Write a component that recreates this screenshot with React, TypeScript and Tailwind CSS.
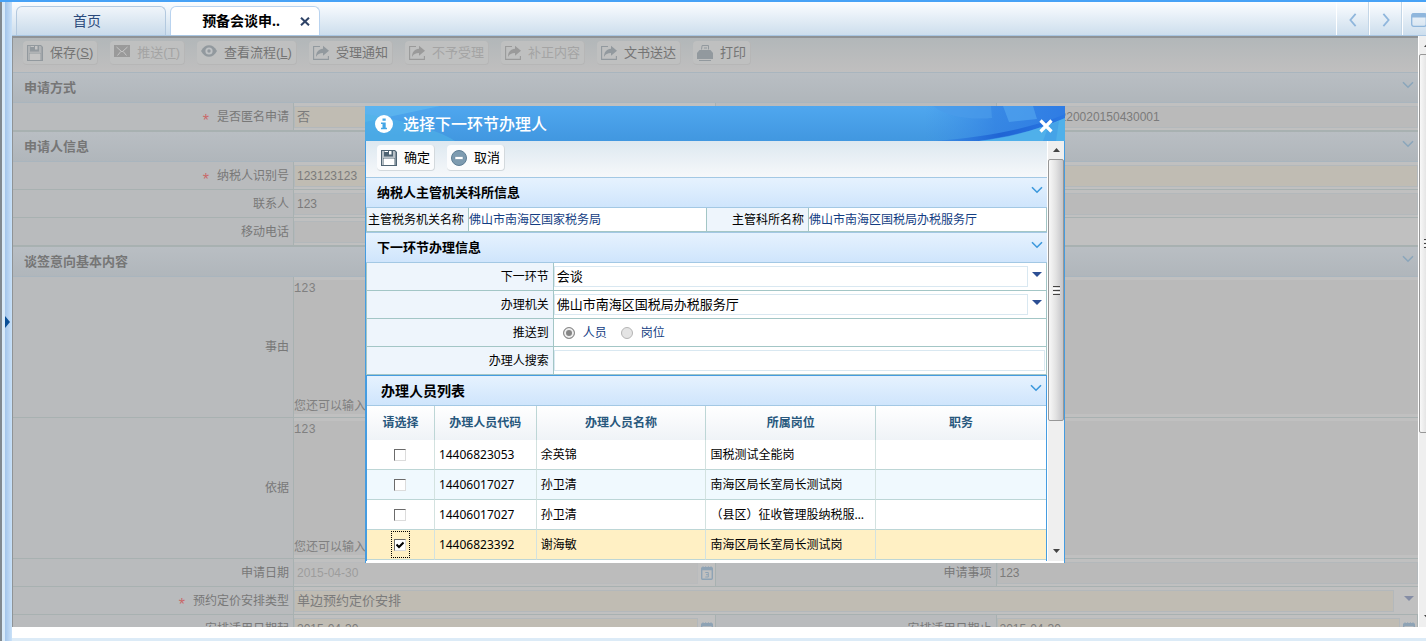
import { useState } from "react";
import type { ReactNode } from "react";

interface Person {
  id: number;
  code: string;
  name: string;
  post: string;
  duty: string;
}

const people: Person[] = [
  { id: 1, code: "14406823053", name: "余英锦", post: "国税测试全能岗", duty: "" },
  { id: 2, code: "14406017027", name: "孙卫清", post: "南海区局长室局长测试岗", duty: "" },
  { id: 3, code: "14406017027", name: "孙卫清", post: "（县区）征收管理股纳税服务岗", duty: "" },
  { id: 4, code: "14406823392", name: "谢海敏", post: "南海区局长室局长测试岗", duty: "" },
];

/* ---------- icons ---------- */

function SaveIcon({ paper }: { paper: string }) {
  return (
    <svg width="16" height="16" viewBox="0 0 16 16">
      <path d="M0 0h14l2 2v14H0z" fill="currentColor" />
      <path d="M1 1h2v5.500h9V1h1.500L14.500 2v13H14V8H2v7H1z" fill={paper} opacity=".6" />
      <path d="M2.500 8.500h11V15h-11z" fill={paper} />
      <path d="M8 1h2.500v3.500H8zM3.500 1H7v1H3.500z" fill={paper} />
    </svg>
  );
}

function MailIcon() {
  return (
    <svg width="16" height="16" viewBox="0 0 16 16">
      <path d="M0 0h16v12H0z" fill="currentColor" />
      <path d="M2.500 2l5.500 5 5.500-5M3.500 10.500L6.800 6.500M12.500 10.500L9.200 6.500" fill="none" stroke="#c6c6c6" />
    </svg>
  );
}

function EyeIcon() {
  return (
    <svg width="16" height="16" viewBox="0 0 16 16">
      <path d="M0 6C2.500 1.800 5 .2 8 .2S13.500 1.800 16 6c-2.500 4.200-5 5.800-8 5.800S2.500 10.200 0 6z" fill="currentColor" />
      <circle cx="8" cy="6" r="3.600" fill="#bfc2c4" />
      <circle cx="8" cy="6" r="1.700" fill="currentColor" />
    </svg>
  );
}

function ShareIcon() {
  return (
    <svg width="16" height="16" viewBox="0 0 16 16">
      <path d="M7 1.500H.6v12.900h14.800V11" fill="none" stroke="currentColor" strokeWidth="1.100" />
      <path d="M10 .8l6 5-6 5V8C6.500 8 4.500 9 3 12c0-5 2.500-8 7-8.300z" fill="currentColor" />
    </svg>
  );
}

function PrintIcon() {
  return (
    <svg width="16" height="16" viewBox="0 0 16 16">
      <path d="M4.500 4.500l.6-4h6.400v4M7 3h3" fill="none" stroke="currentColor" />
      <path d="M2.500 5h11L16 8v6H0V8z" fill="currentColor" />
      <path d="M2 15.500h12" stroke="currentColor" />
    </svg>
  );
}

function MinusIcon() {
  return (
    <svg width="16" height="16" viewBox="0 0 16 16">
      <circle cx="8" cy="8" r="7.500" fill="#7d9bb0" stroke="#5d7d94" />
      <rect x="4" y="6.500" width="8" height="3" rx=".5" fill="#fff" stroke="#5d7d94" strokeWidth=".5" />
    </svg>
  );
}

function InfoIcon() {
  return (
    <svg width="18" height="18" viewBox="0 0 18 18">
      <circle cx="9" cy="9" r="9" fill="#fff" />
      <path d="M7.500 3.500h3.200v2.300H7.500zM6 7.500h4.700v5.200H12v1.500H6v-1.500h1.500V9H6z" fill="#44a6e6" />
    </svg>
  );
}

function Chevron({ color }: { color: string }) {
  return (
    <svg width="12" height="8" viewBox="0 0 12 8" fill="none" stroke={color} strokeWidth="1.600">
      <path d="M1 1.200l5 5 5-5" />
    </svg>
  );
}

function Caret({ color }: { color: string }) {
  return (
    <svg width="10" height="5" viewBox="0 0 10 5">
      <path d="M0 0h10L5 5z" fill={color} />
    </svg>
  );
}

function CalendarIcon() {
  return (
    <svg width="12" height="14" viewBox="0 0 12 14" fill="none" stroke="#8ea3b5">
      <rect x=".7" y="1.700" width="10.600" height="11.600" rx="1" strokeWidth="1.400" />
      <path d="M0 3h12" strokeWidth="2.500" />
      <path d="M2 .3v2M4.700.3v2M7.400.3v2M10 .3v2" />
      <path d="M4.300 6.500h3v4.500h-3M5 8.700h2.300" />
    </svg>
  );
}

function ScrollArrow({ up = false }: { up?: boolean }) {
  return (
    <svg width="7" height="4" viewBox="0 0 7 4" className="shrink-0">
      <path d={up ? "M0 4h7L3.500 0z" : "M0 0h7L3.500 4z"} fill="#444" />
    </svg>
  );
}

function ScrollRail({ thumb, className = "" }: { thumb: string; className?: string }) {
  return (
    <div className={`flex shrink-0 flex-col items-center bg-[#efefef] ${className}`}>
      <div className="flex h-[18px] shrink-0 items-center">
        <ScrollArrow up />
      </div>
      <div
        className={`flex w-full flex-col items-center justify-center gap-px rounded-xs border border-[#979797] bg-linear-to-r from-[#f8f8f8] via-[#e2e2e2] to-[#c4c4c8] ${thumb}`}
      >
        <span className="h-px w-[7px] bg-[#444]" />
        <span className="h-px w-[7px] bg-white" />
        <span className="h-px w-[7px] bg-[#444]" />
        <span className="h-px w-[7px] bg-white" />
        <span className="h-px w-[7px] bg-[#444]" />
      </div>
      <div className="flex grow items-end pb-2">
        <ScrollArrow />
      </div>
    </div>
  );
}

/* ---------- background page ---------- */

interface ToolButtonProps {
  icon: ReactNode;
  children: ReactNode;
  disabled?: boolean;
}

function ToolButton({ icon, children, disabled }: ToolButtonProps) {
  return (
    <button
      type="button"
      disabled={disabled}
      className="flex h-6 shrink-0 items-center gap-[7px] rounded-sm border-r border-b border-[#b6b6b6] bg-[#bfc0c0] pr-1 pl-1 font-['Liberation_Sans','Noto_Sans_CJK_SC',sans-serif] text-[13px] text-[#747474] disabled:text-[#a4a4a4]"
    >
      <span className={disabled ? "text-[#9a9a9a]" : "text-[#92999e]"}>{icon}</span>
      <span>{children}</span>
    </button>
  );
}

function PageSection({ title }: { title: string }) {
  return (
    <div className="flex h-[30px] shrink-0 items-start justify-between border-b border-[#a9b5be] bg-linear-to-b from-[#b9bec3] to-[#b0b6bb] pr-1 pl-[11px]">
      <h2 className="text-[13px] leading-[29px] font-bold text-[#767676]">{title}</h2>
      <button type="button" aria-label="收起" className="pt-2">
        <Chevron color="#8ba6bb" />
      </button>
    </div>
  );
}

function PageLabel({ htmlFor, required, children }: { htmlFor: string; required?: boolean; children: ReactNode }) {
  return (
    <label
      htmlFor={htmlFor}
      className="flex items-center justify-end gap-2 border-r border-[#a8b1b1] bg-[#b9bbbd] pr-1 text-[#787878]"
    >
      {required && <span className="pt-2 font-['Liberation_Sans'] text-base leading-3 text-[#c96a6a]">*</span>}
      {children}
    </label>
  );
}

const pageRow = "grid min-h-7 shrink-0 grid-cols-[2fr_3fr_2fr_3fr] border-b border-[#a8b1b1] bg-[#c0c0c0]";
const pageInput =
  "h-[22px] w-full min-w-0 border border-[#b3b8bb] bg-[#bababa] px-0.5 font-['Liberation_Sans','Noto_Sans_CJK_SC',sans-serif] text-xs text-[#7b7b7b] outline-none";
const beigeInput =
  "h-[22px] w-full min-w-0 border border-[#b3b8bb] bg-[#c0bcb3] px-0.5 font-['Liberation_Sans','Noto_Sans_CJK_SC',sans-serif] text-[#7b7b7b] outline-none";

function DateCell({ id, value, beige, muted }: { id: string; value: string; beige?: boolean; muted?: boolean }) {
  return (
    <div className="flex min-w-0 items-center gap-[3px] border-r border-[#a8b1b1] pr-0.5">
      <input
        id={id}
        defaultValue={value}
        className={beige ? `${beigeInput} text-xs` : muted ? `${pageInput} opacity-50` : pageInput}
      />
      <button type="button" aria-label="选择日期" className="shrink-0">
        <CalendarIcon />
      </button>
    </div>
  );
}

function ReasonRow({ id, label }: { id: string; label: string }) {
  return (
    <div className="grid min-h-[141px] shrink-0 grid-cols-[2fr_8fr] border-b border-[#a8b1b1] bg-[#c0c0c0]">
      <PageLabel htmlFor={id}>{label}</PageLabel>
      <div className="my-[3px] flex flex-col bg-[#bababa] text-[#808080]">
        <textarea
          id={id}
          defaultValue="123"
          className="w-full grow resize-none pt-px font-['Liberation_Mono'] text-xs outline-none"
        />
        <p className="leading-4">您还可以输入</p>
      </div>
    </div>
  );
}

function ApplicationPage() {
  return (
    <div className="flex min-w-0 grow flex-col overflow-hidden border-t-2 border-l border-[#8f9396] bg-[#c0c0c0]">
      <div className="flex h-[35px] shrink-0 items-center gap-3 border-b border-[#a9b5be] bg-linear-to-b from-[#b2b7b9] to-[#c0bfbf] pb-1 pl-2.5">
        <ToolButton icon={<SaveIcon paper="#c4c4c4" />}>
          保存(<u>S</u>)
        </ToolButton>
        <ToolButton icon={<MailIcon />} disabled>
          推送(<u>T</u>)
        </ToolButton>
        <ToolButton icon={<EyeIcon />}>
          查看流程(<u>L</u>)
        </ToolButton>
        <ToolButton icon={<ShareIcon />}>受理通知</ToolButton>
        <ToolButton icon={<ShareIcon />} disabled>
          不予受理
        </ToolButton>
        <ToolButton icon={<ShareIcon />} disabled>
          补正内容
        </ToolButton>
        <ToolButton icon={<ShareIcon />}>文书送达</ToolButton>
        <ToolButton icon={<PrintIcon />}>打印</ToolButton>
      </div>

      <PageSection title="申请方式" />
      <div className={pageRow}>
        <PageLabel htmlFor="anonymous" required>
          是否匿名申请
        </PageLabel>
        <div className="flex items-center border-r border-[#a8b1b1]">
          <select id="anonymous" className={`${beigeInput} appearance-none text-[13px]`}>
            <option>否</option>
          </select>
        </div>
        <PageLabel htmlFor="applyNo">申请编号</PageLabel>
        <div className="flex items-center">
          <input id="applyNo" defaultValue="440600200220020150430001" className={pageInput} />
        </div>
      </div>

      <div className="h-px shrink-0 bg-[#a8b1b1]" />
      <PageSection title="申请人信息" />
      <div className={pageRow}>
        <PageLabel htmlFor="taxpayerId" required>
          纳税人识别号
        </PageLabel>
        <div className="col-span-3 flex items-center">
          <input id="taxpayerId" defaultValue="123123123" className={`${beigeInput} text-xs`} />
        </div>
      </div>
      <div className={pageRow}>
        <PageLabel htmlFor="contact">联系人</PageLabel>
        <div className="col-span-3 flex items-center">
          <input id="contact" defaultValue="123" className={pageInput} />
        </div>
      </div>
      <div className={pageRow}>
        <PageLabel htmlFor="mobile">移动电话</PageLabel>
        <div className="flex items-center">
          <input id="mobile" className={pageInput} />
        </div>
      </div>

      <div className="h-px shrink-0 bg-[#a8b1b1]" />
      <PageSection title="谈签意向基本内容" />
      <ReasonRow id="reason" label="事由" />
      <ReasonRow id="basis" label="依据" />
      <div className={pageRow}>
        <PageLabel htmlFor="applyDate">申请日期</PageLabel>
        <DateCell id="applyDate" value="2015-04-30" muted />
        <PageLabel htmlFor="applyItem">申请事项</PageLabel>
        <div className="flex items-center">
          <input id="applyItem" defaultValue="123" className={pageInput} />
        </div>
      </div>
      <div className={pageRow}>
        <PageLabel htmlFor="arrangeType" required>
          预约定价安排类型
        </PageLabel>
        <div className="col-span-3 flex items-center gap-[10px] pr-1">
          <select id="arrangeType" className={`${beigeInput} appearance-none text-[13px]`}>
            <option>单边预约定价安排</option>
          </select>
          <span className="shrink-0 pb-1">
            <Caret color="#858da5" />
          </span>
        </div>
      </div>
      <div className={pageRow}>
        <PageLabel htmlFor="startDate">安排适用日期起</PageLabel>
        <DateCell id="startDate" value="2015-04-30" beige />
        <PageLabel htmlFor="endDate">安排适用日期止</PageLabel>
        <DateCell id="endDate" value="2015-04-30" beige />
      </div>
    </div>
  );
}

/* ---------- dialog ---------- */

function DialogSection({ title, large }: { title: string; large?: boolean }) {
  return (
    <div
      className={`flex h-[30px] items-start justify-between border-b border-[#a3c8e4] bg-linear-to-b from-[#e6f2fe] to-[#cfe5fc] pr-1 ${
        large ? "pl-[14px]" : "pl-[11px]"
      }`}
    >
      <h3 className={`font-bold text-black ${large ? "text-sm leading-[29px]" : "text-[13px] leading-[29px]"}`}>
        {title}
      </h3>
      <button type="button" aria-label="收起" className="pt-2">
        <Chevron color="#3b98dc" />
      </button>
    </div>
  );
}

function DialogButton({ icon, children }: { icon: ReactNode; children: ReactNode }) {
  return (
    <button
      type="button"
      className="flex h-[26px] items-center gap-[7px] rounded-sm border-r border-b border-[#d3d9dd] bg-[#fbfcfd] pr-1 pl-1 text-[13px] text-black"
    >
      <span className="text-[#4f6473]">{icon}</span>
      {children}
    </button>
  );
}

function TitleArt() {
  return (
    <>
      <svg className="absolute top-0 left-0" width="110" height="35" viewBox="0 0 110 35">
        <path d="M0 0h75L0 16z" fill="#6cc6f2" opacity=".45" />
        <path d="M0 8c30 5 70 14 90 27H0z" fill="#50b4e8" opacity=".6" />
      </svg>
      <svg className="absolute top-0 right-0" width="140" height="35" viewBox="0 0 140 35">
        <defs>
          <linearGradient id="titleShade" x1="0" x2="1" y1="0" y2="0">
            <stop offset="0" stopColor="#3a8be6" stopOpacity="0" />
            <stop offset=".5" stopColor="#2f7de2" stopOpacity=".7" />
            <stop offset="1" stopColor="#2f7ce4" />
          </linearGradient>
          <linearGradient id="titleSwoosh" x1="0" x2="1" y1="0" y2="0">
            <stop offset="0" stopColor="#2e7ce0" stopOpacity=".4" />
            <stop offset=".5" stopColor="#1f64d4" />
            <stop offset="1" stopColor="#2a78e4" />
          </linearGradient>
        </defs>
        <path d="M0 0h140v35H0z" fill="url(#titleShade)" />
        <path d="M8 0h58l1 12C45 14 22 11 8 0z" fill="#4a9bea" opacity=".7" />
        <path d="M78 0h30l4 13-28 3z" fill="#56aaf0" opacity=".6" />
        <path d="M140 8C108 22 62 31 10 35h44c32-5 62-12 86-23z" fill="url(#titleSwoosh)" />
        <path d="M140 12C115 23 87 31 54 35h86z" fill="#4fb0ea" />
        <path d="M124 19l10-4-3 20h-13z" fill="#3f9be4" opacity=".6" />
      </svg>
    </>
  );
}

const dialogLabel = "flex items-center justify-end border-r border-[#a3c6c6] bg-[#eef5fc] pr-1 text-black";
const dialogRow = "grid h-7 shrink-0 grid-cols-[27.5%_1fr] border-x border-b border-[#a3c6c6] bg-white";
const dialogField = "h-[21px] w-full min-w-0 border border-[#d9e8f1] bg-white px-0.5 text-[13px] text-black outline-none";
const radioClass =
  "size-3 appearance-none rounded-full border border-[#b5b5b5] bg-[#e4e4e4] checked:border-[#8c8c8c] checked:bg-[#858585] checked:inset-ring-2 checked:inset-ring-[#ededed]";

function SelectRow({ id, label, value }: { id: string; label: string; value: string }) {
  return (
    <div className={dialogRow}>
      <label htmlFor={id} className={dialogLabel}>
        {label}
      </label>
      <div className="flex min-w-0 items-center gap-1 pr-1">
        <select id={id} className={`${dialogField} appearance-none`}>
          <option>{value}</option>
        </select>
        <span className="shrink-0 pb-1">
          <Caret color="#2c4f94" />
        </span>
      </div>
    </div>
  );
}

function HandlerDialog() {
  const [selected, setSelected] = useState<number[]>([4]);
  const [target, setTarget] = useState("person");

  const toggle = (id: number) => {
    setSelected((prev) => (prev.includes(id) ? prev.filter((x) => x !== id) : [...prev, id]));
  };

  return (
    <div role="dialog" aria-label="选择下一环节办理人" className="flex w-[700px] max-w-full flex-col bg-white">
      <div className="relative flex h-[35px] shrink-0 items-center justify-between overflow-hidden bg-linear-to-b from-[#4fa7ef] to-[#4197e0] pr-3 pl-[10px]">
        <TitleArt />
        <div className="relative flex items-center gap-[10px]">
          <InfoIcon />
          <h1 className="text-base font-medium text-white">选择下一环节办理人</h1>
        </div>
        <button type="button" aria-label="关闭" className="relative pt-1">
          <svg width="14" height="14" viewBox="0 0 14 14" stroke="#fff" strokeWidth="3.200">
            <path d="M1.500 1.500l11 11M12.500 1.500l-11 11" />
          </svg>
        </button>
      </div>

      <div className="flex min-h-0 grow border-x border-[#459ce0] pb-0.5">
        <div className="flex min-w-0 grow flex-col overflow-hidden">
          <div className="flex h-[37px] shrink-0 items-center gap-3 border-b border-[#a3c8e4] bg-linear-to-b from-[#dde8f0] to-[#f6f8fa] pb-0.5 pl-[11px]">
            <DialogButton icon={<SaveIcon paper="#ffffff" />}>确定</DialogButton>
            <DialogButton icon={<MinusIcon />}>取消</DialogButton>
          </div>

          <DialogSection title="纳税人主管机关科所信息" />
          <dl className="grid h-6 shrink-0 grid-cols-[15%_35%_15%_35%] border-b border-l border-[#a3c6c6] leading-[23px]">
            <dt className={`${dialogLabel} whitespace-nowrap`}>主管税务机关名称</dt>
            <dd className="border-r border-[#a3c6c6] text-[#133d83]">佛山市南海区国家税务局</dd>
            <dt className={dialogLabel}>主管科所名称</dt>
            <dd className="border-r border-[#a3c6c6] text-[#133d83]">佛山市南海区国税局办税服务厅</dd>
          </dl>

          <div className="border-t border-[#a3c8e4]">
            <DialogSection title="下一环节办理信息" />
          </div>
          <SelectRow id="nextStep" label="下一环节" value="会谈" />
          <SelectRow id="office" label="办理机关" value="佛山市南海区国税局办税服务厅" />
          <div className={dialogRow}>
            <span className={dialogLabel}>推送到</span>
            <div className="flex items-center gap-[14px] pl-[9px] text-[#133d83]">
              <label className="flex items-center gap-2">
                <input
                  type="radio"
                  name="target"
                  className={radioClass}
                  checked={target === "person"}
                  onChange={() => setTarget("person")}
                />
                人员
              </label>
              <label className="flex items-center gap-2">
                <input
                  type="radio"
                  name="target"
                  className={radioClass}
                  checked={target === "post"}
                  onChange={() => setTarget("post")}
                />
                岗位
              </label>
            </div>
          </div>
          <div className={dialogRow}>
            <label htmlFor="search" className={dialogLabel}>
              办理人搜索
            </label>
            <div className="flex items-center pr-px">
              <input id="search" className={dialogField} />
            </div>
          </div>

          <div className="grow border border-b-0 border-[#459ce0]">
            <DialogSection title="办理人员列表" large />
            <table className="w-full table-fixed border-separate border-spacing-0">
              <colgroup>
                <col className="w-[10%]" />
                <col className="w-[15%]" />
                <col className="w-[25%]" />
                <col className="w-[25%]" />
                <col className="w-[25%]" />
              </colgroup>
              <thead>
                <tr className="h-[34px] bg-linear-to-b from-white to-[#eff3f7] text-[#28587d]">
                  {["请选择", "办理人员代码", "办理人员名称", "所属岗位", "职务"].map((head) => (
                    <th key={head} className="border-r border-[#bdd6d6] p-0 font-bold last:border-r-0">
                      {head}
                    </th>
                  ))}
                </tr>
              </thead>
              <tbody>
                {people.map((person) => {
                  const checked = selected.includes(person.id);
                  return (
                    <tr
                      key={person.id}
                      className={`h-[30px] text-black *:border-b *:border-b-[#bdd6d6] ${
                        checked ? "bg-[#fff0c4]" : "bg-white even:bg-[#f0f9fe]"
                      }`}
                    >
                      <td className="border-r border-r-[#d3e2e0] p-0">
                        <label
                          className={`mx-auto grid h-[27px] w-[19px] place-items-center border border-dotted ${
                            checked ? "border-black" : "border-transparent"
                          }`}
                        >
                          <input
                            type="checkbox"
                            aria-label={person.name}
                            checked={checked}
                            onChange={() => toggle(person.id)}
                            className="col-start-1 row-start-1 size-3 appearance-none border border-t-[#6b6b6b] border-r-[#dcdcdc] border-b-[#dcdcdc] border-l-[#6b6b6b] bg-white"
                          />
                          {checked && (
                            <svg
                              width="8"
                              height="8"
                              viewBox="0 0 8 8"
                              className="pointer-events-none col-start-1 row-start-1"
                            >
                              <path d="M.5 3.500l2.500 2.500 4.500-4.500" fill="none" stroke="#000" strokeWidth="2" />
                            </svg>
                          )}
                        </label>
                      </td>
                      <td className="border-r border-r-[#d3e2e0] p-0 pl-1">{person.code}</td>
                      <td className="border-r border-r-[#d3e2e0] p-0 pl-1">{person.name}</td>
                      <td className="truncate border-r border-r-[#d3e2e0] p-0 pr-2 pl-1">{person.post}</td>
                      <td className="p-0 pl-1">{person.duty}</td>
                    </tr>
                  );
                })}
              </tbody>
            </table>
          </div>
        </div>
        <ScrollRail className="ml-px w-4" thumb="h-[262px]" />
      </div>
    </div>
  );
}

/* ---------- shell ---------- */

function TabBar() {
  return (
    <div className="flex h-[34px] shrink-0 items-end justify-between border-b border-[#a9c6e2] bg-linear-to-b from-[#fbfdff] to-[#cddeed]">
      <div className="flex gap-1 pl-1 text-sm">
        <button
          type="button"
          className="h-[29px] w-[150px] rounded-t-md border border-b-0 border-[#b3c9df] bg-linear-to-b from-[#f0f5fa] to-[#c9dbeb] pr-2 text-[#2b4a7c]"
        >
          首页
        </button>
        <div className="flex h-[29px] w-[150px] items-center justify-end gap-5 rounded-t-md border border-b-0 border-[#b9d3ef] bg-white pr-[9px] font-bold text-black">
          <span>预备会谈申..</span>
          <button type="button" aria-label="关闭标签">
            <svg width="10" height="9" viewBox="0 0 10 9" stroke="#2f4468" strokeWidth="2">
              <path d="M1 .7l8 7.600M9 .7L1 8.300" />
            </svg>
          </button>
        </div>
      </div>
      <div className="flex h-full">
        {["M8 1L2 8l6 7", "M2 1l6 7-6 7"].map((d, i) => (
          <button
            key={d}
            type="button"
            aria-label={i === 0 ? "上一个" : "下一个"}
            className="flex w-[33px] items-center justify-center border-r border-l border-r-[#c3d6e7] border-l-white pt-0.5"
          >
            <svg width="10" height="14" viewBox="0 0 10 16" fill="none" stroke="#8fb6dc" strokeWidth="2">
              <path d={d} />
            </svg>
          </button>
        ))}
        <button type="button" aria-label="窗口" className="w-6 overflow-hidden border-l border-white pt-0.5 pl-2">
          <svg width="16" height="14" viewBox="0 0 16 14" fill="none" stroke="#8fb6dc">
            <rect x=".7" y=".7" width="14.600" height="12.600" rx="2" strokeWidth="1.300" />
            <path d="M1 2.500h14" strokeWidth="4" />
          </svg>
        </button>
      </div>
    </div>
  );
}

export default function App() {
  return (
    <div className="flex h-screen flex-col overflow-hidden bg-[#dcebf7] font-['Noto_Sans','Noto_Sans_CJK_SC',sans-serif] text-xs">
      <div className="h-0.5 shrink-0 bg-[#47a2f6]" />
      <div className="flex min-h-0 grow">
        <div className="flex w-3 shrink-0 items-center border-l-2 border-[#81898f] bg-[#d8eaf8] pl-[3px]">
          <div className="flex h-full w-[7px] items-center bg-linear-to-r from-[#a3c5ea] to-[#c9e1f8]">
            <svg width="5" height="12" viewBox="0 0 5 12">
              <path d="M0 0l5 6-5 6z" fill="#0a4f96" />
            </svg>
          </div>
        </div>
        <div className="flex min-w-0 grow flex-col pb-[3px]">
          <TabBar />
          <div className="flex min-h-0 grow bg-white pb-[11px]">
            <div className="relative flex min-w-0 grow overflow-hidden">
              <ApplicationPage />
              <div className="absolute inset-0 flex justify-center pt-[70px] pb-16">
                <HandlerDialog />
              </div>
            </div>
            <div className="ml-px w-[7px] shrink-0 overflow-hidden">
              <ScrollRail className="h-full w-4" thumb="h-[379px]" />
            </div>
          </div>
        </div>
      </div>
    </div>
  );
}
